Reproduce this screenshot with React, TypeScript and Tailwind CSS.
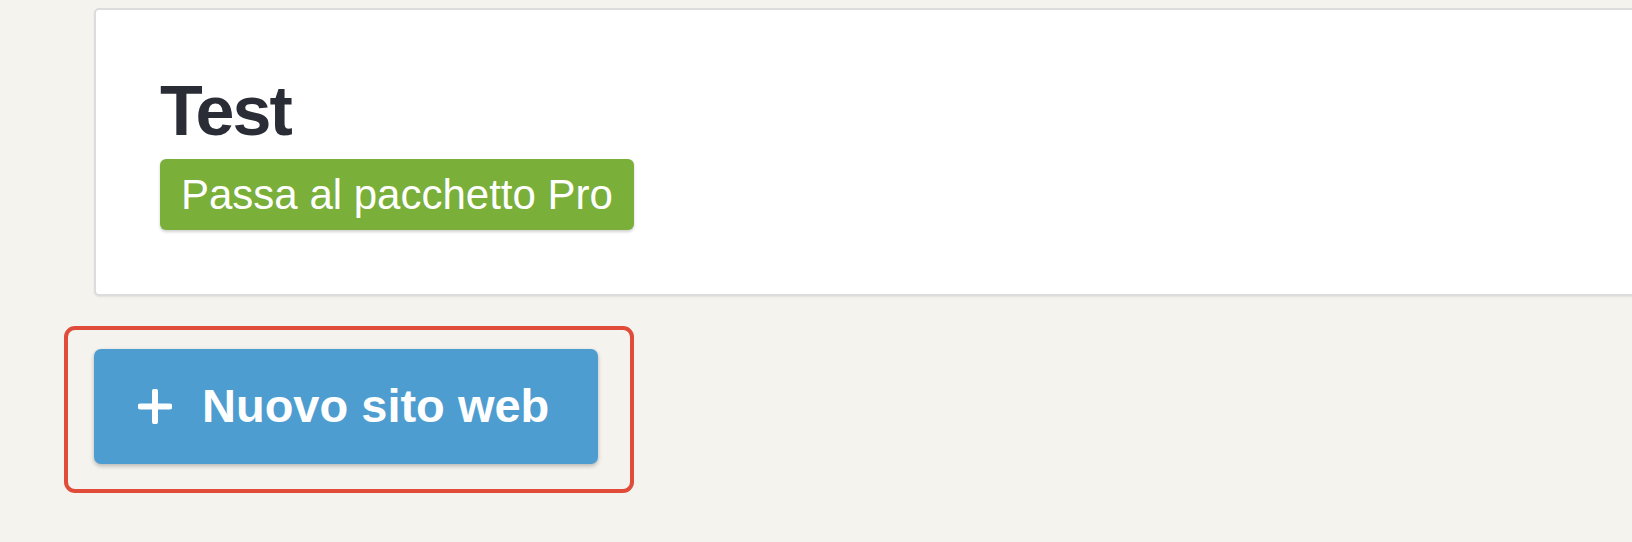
import React from 'react';

export default function App() {
  return (
    <div className="w-[1632px] h-[542px] overflow-hidden bg-[#f4f3ee] pt-[8px] font-['Liberation_Sans',Arial,sans-serif]">
      <div className="ml-[94px] w-[1600px] h-[288px] bg-white border-2 border-[#dcdcdc] rounded-[5px] pt-[66px] pl-[64px] shadow-[0_1px_2px_rgba(0,0,0,0.08)]">
        <h1 className="text-[70px] leading-[70px] font-bold tracking-[-2px] text-[#2a2d36] mb-[13px]">Test</h1>
        <span className="inline-flex items-center h-[71px] px-[21px] rounded-[6px] bg-[#7aaf3a] text-white text-[42px] shadow-[0_2px_3px_rgba(0,0,0,0.18)]">
          Passa al pacchetto Pro
        </span>
      </div>

      <div className="ml-[64px] mt-[30px] inline-block border-[4px] border-[#e04b3a] rounded-[11px] pl-[26px] pr-[32px] pt-[19px] pb-[25px]">
        <button className="flex items-center gap-[30px] w-[504px] h-[115px] pl-[44px] rounded-[7px] bg-[#4e9dd0] text-white text-[47px] font-bold shadow-[0_2px_4px_rgba(0,0,0,0.25)]">
          <svg width="34" height="35" viewBox="0 0 34 35" className="shrink-0">
            <path d="M17 2.5v30M2.5 17.5h29" stroke="white" strokeWidth="6" strokeLinecap="round" fill="none" />
          </svg>
          Nuovo sito web
        </button>
      </div>
    </div>
  );
}
